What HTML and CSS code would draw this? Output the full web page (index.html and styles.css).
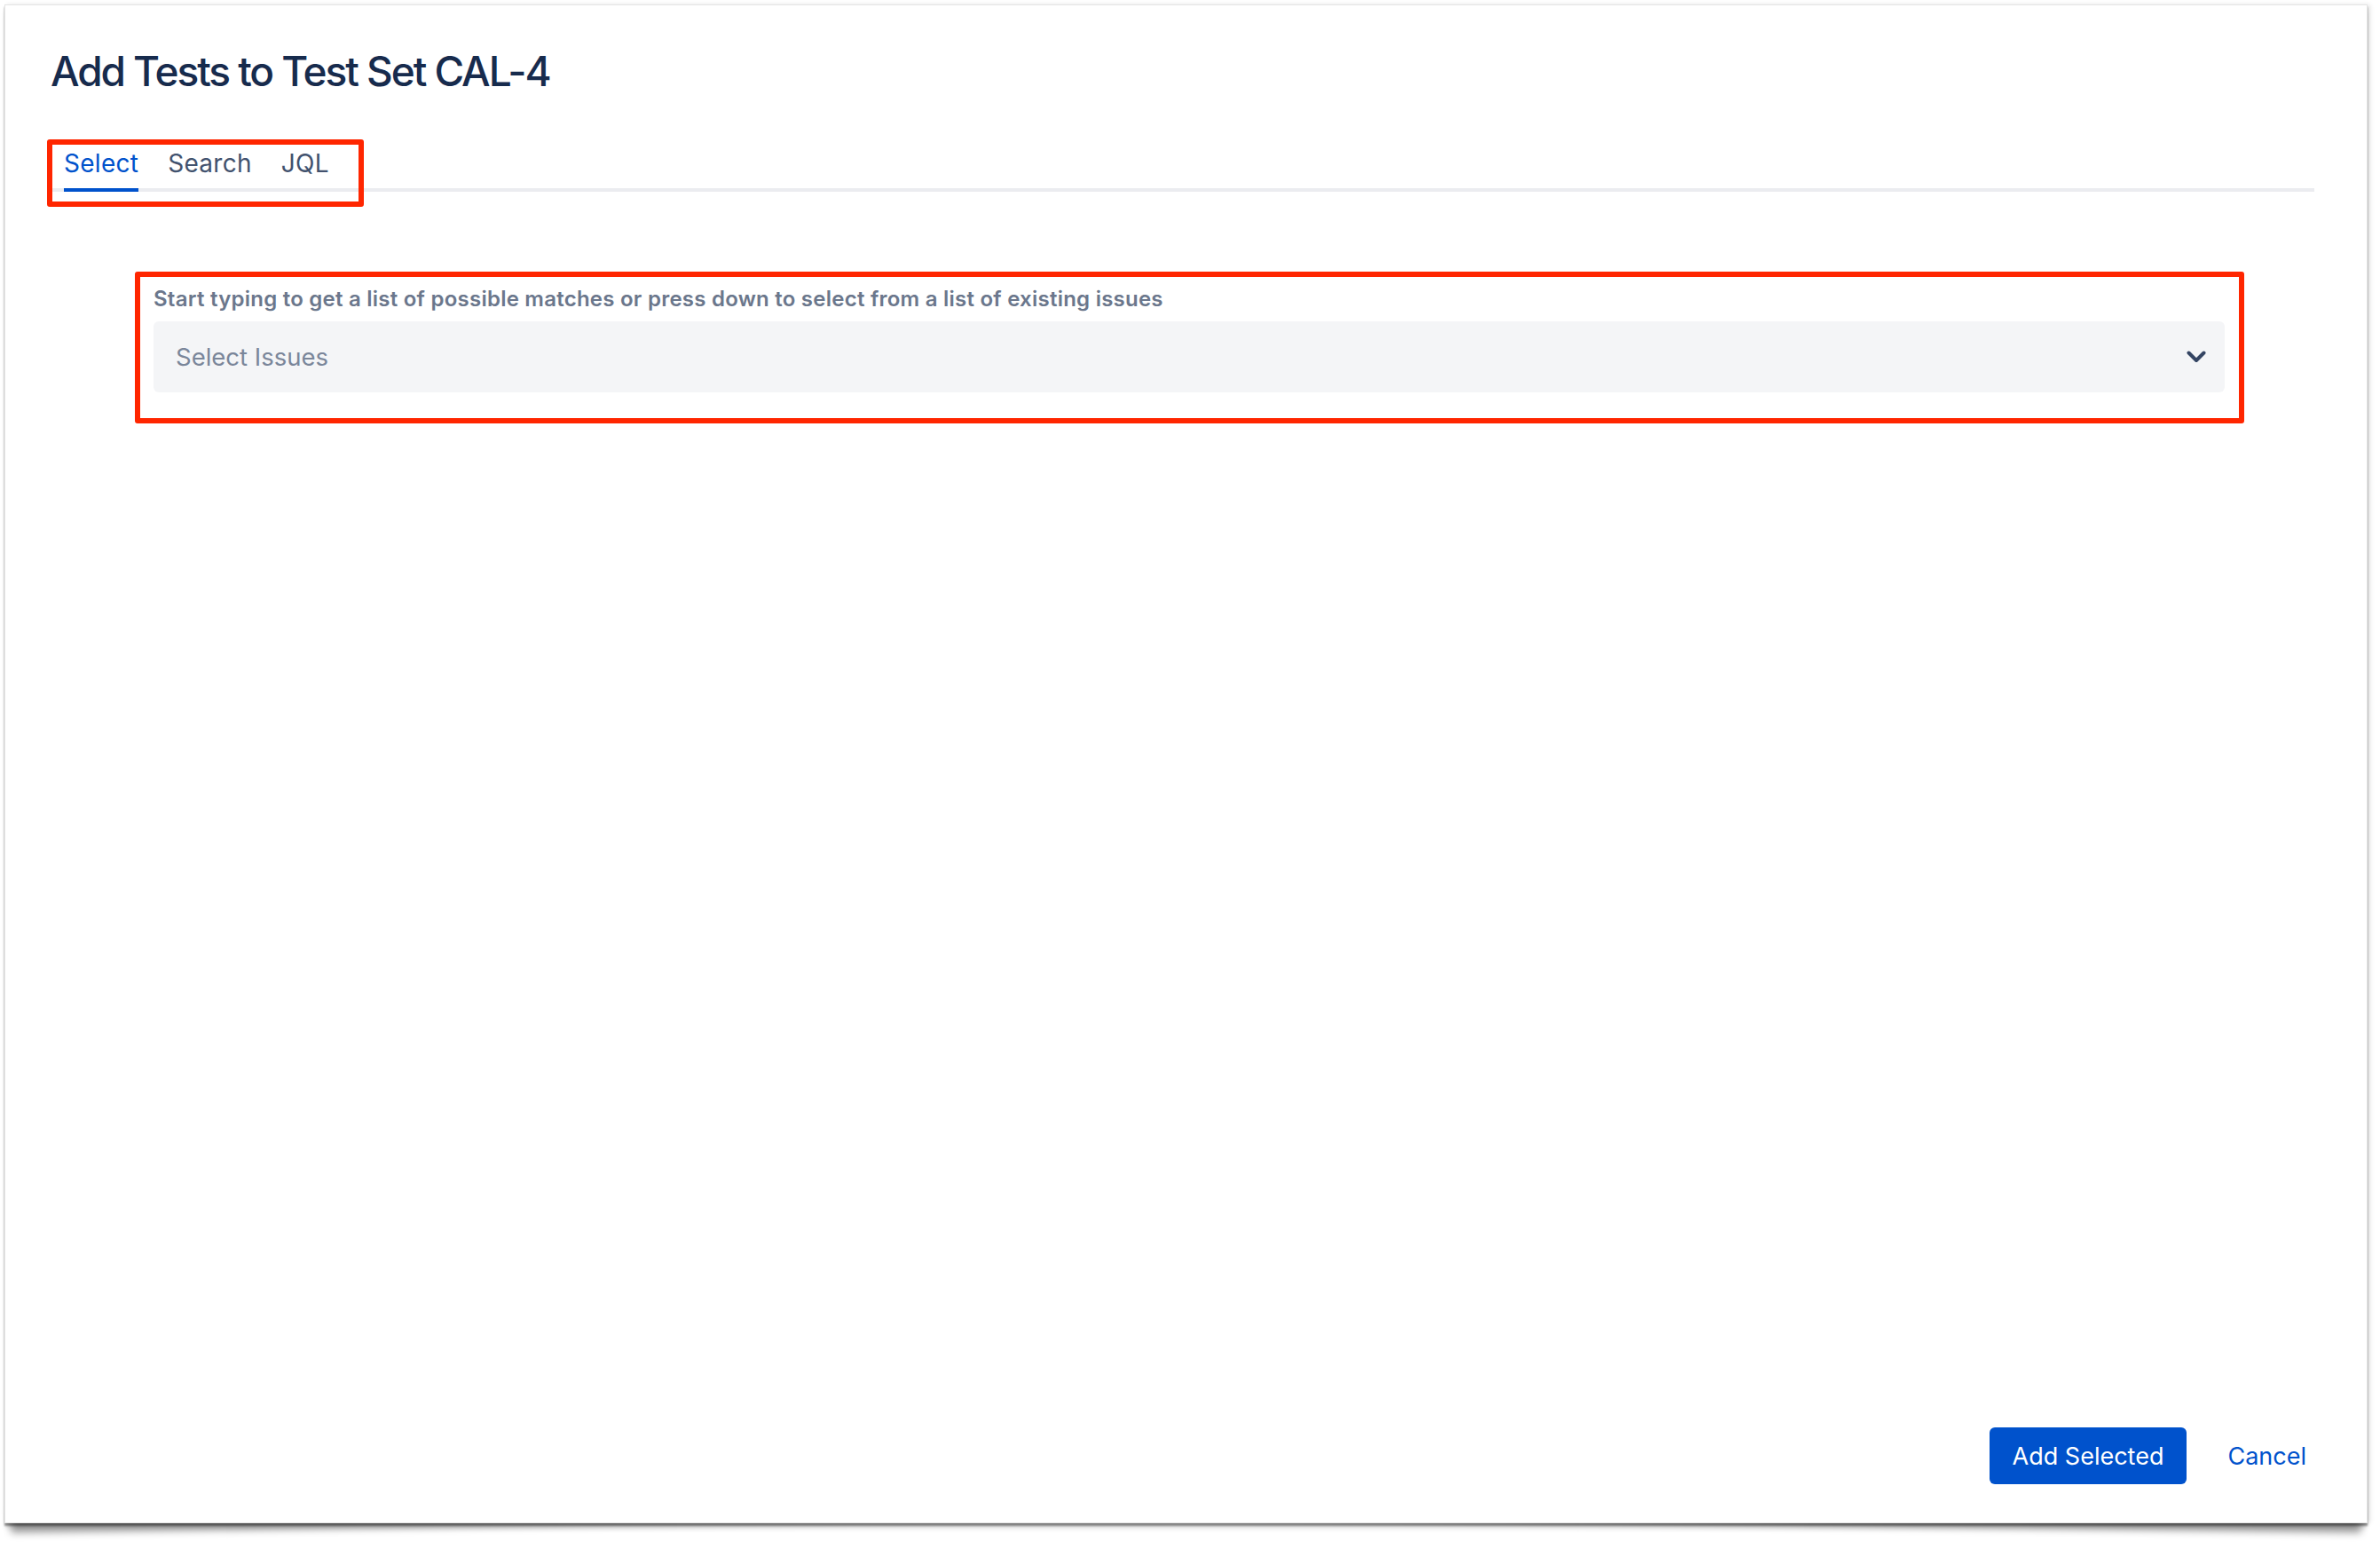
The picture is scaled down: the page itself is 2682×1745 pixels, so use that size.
FILE: index.html
```html
<!DOCTYPE html>
<html lang="en">
<head>
<meta charset="utf-8">
<title>Add Tests to Test Set CAL-4</title>
<link rel="stylesheet" href="styles.css">
</head>
<body>
<div class="dialog">
  <div class="dialog-main">
    <header class="dialog-header">
      <h1 class="dialog-title">Add Tests to Test Set CAL-4</h1>
      <div class="tabs-wrap">
        <nav class="tabs">
          <span class="tab tab-active">Select</span>
          <span class="tab">Search</span>
          <span class="tab">JQL</span>
        </nav>
        <span class="mark mark-tabs"></span>
      </div>
    </header>
    <section class="field-frame">
      <label class="field-label">Start typing to get a list of possible matches or press down to select from a list of existing issues</label>
      <div class="select-box">
        <span class="select-placeholder">Select Issues</span>
        <svg class="chevron" width="22" height="14" viewBox="0 0 22 14" aria-hidden="true">
          <polyline points="2.5,2.5 11,11 19.5,2.5" fill="none" stroke="#344563" stroke-width="4" stroke-linecap="round" stroke-linejoin="round"/>
        </svg>
      </div>
    </section>
  </div>
  <footer class="dialog-footer">
    <button class="btn btn-primary">Add Selected</button>
    <button class="btn btn-link">Cancel</button>
  </footer>
</div>
</body>
</html>
```

FILE: styles.css
```css
html {
  margin: 0;
  padding: 0;
  background: #ffffff;
}

body {
  margin: 0;
  padding: 0;
  font-family: Inter, "Noto Sans", "Liberation Sans", sans-serif;
  width: 2682px;
  height: 1745px;
  overflow: hidden;
}

.dialog {
  position: relative;
  margin: 5px 0 0 5px;
  width: 2663px;
  height: 1711px;
  box-sizing: border-box;
  background: #ffffff;
  border: 1px solid #e4e4e4;
  box-shadow: 0 3px 2px rgba(0, 0, 0, 0.38), 0 7px 6px -2px rgba(0, 0, 0, 0.16), 3px 0 5px rgba(0, 0, 0, 0.10);
  display: flex;
  flex-direction: column;
}

.dialog::before,
.dialog::after {
  content: "";
  position: absolute;
  z-index: -1;
  bottom: 14px;
  width: 49%;
  height: 30px;
  box-shadow: 0 17px 8px rgba(0, 0, 0, 0.36);
}

.dialog::before {
  left: 6px;
  transform: rotate(-0.8deg);
}

.dialog::after {
  right: 6px;
  transform: rotate(0.8deg);
}

.dialog-main {
  flex: 1;
  display: flex;
  flex-direction: column;
}

.dialog-header {
  padding: 46px 59px 0 51px;
}

.dialog-title {
  margin: 0;
  font-size: 46px;
  line-height: 56px;
  font-weight: 500;
  color: #172b4d;
  letter-spacing: -0.045em;
}

.tabs-wrap {
  position: relative;
  margin-top: 56px;
}

.tabs {
  display: flex;
  gap: 33px;
  padding-left: 15px;
  box-shadow: inset 0 -4px 0 #ebecf0;
}

.tab {
  font-size: 28px;
  line-height: 40px;
  padding-bottom: 12px;
  color: #42526e;
  font-weight: 400;
  letter-spacing: 0.01em;
}

.tab-active {
  color: #0052cc;
  box-shadow: inset 0 -4px 0 #0052cc;
}

.mark {
  position: absolute;
  border: 6px solid #ff2600;
  border-radius: 3px;
  box-sizing: border-box;
}

.mark-tabs {
  left: -4px;
  top: -7px;
  width: 357px;
  height: 76px;
}

.field-frame {
  margin: 90px 138px 0 146px;
  border: 6px solid #ff2600;
  border-radius: 3px;
  padding: 9px 16px 29px 15px;
  display: flex;
  flex-direction: column;
  gap: 9px;
}

.field-label {
  font-size: 24px;
  line-height: 32px;
  font-weight: 600;
  color: #6b778c;
  letter-spacing: 0.01em;
}

.select-box {
  height: 80px;
  background: #f4f5f7;
  border-radius: 6px;
  display: flex;
  align-items: center;
  justify-content: space-between;
  padding: 0 21px 0 25px;
}

.select-placeholder {
  font-size: 27.5px;
  color: #7a869a;
}

.chevron {
  display: block;
}

.dialog-footer {
  display: flex;
  justify-content: flex-end;
  gap: 20px;
  padding: 0 42px 43px 0;
}

.btn {
  font-family: Inter, "Noto Sans", "Liberation Sans", sans-serif;
  font-size: 27px;
  height: 64px;
  padding: 0 26px;
  border: none;
  border-radius: 6px;
  cursor: pointer;
}

.btn-primary {
  background: #0052cc;
  color: #ffffff;
}

.btn-link {
  background: transparent;
  color: #0052cc;
}
```
